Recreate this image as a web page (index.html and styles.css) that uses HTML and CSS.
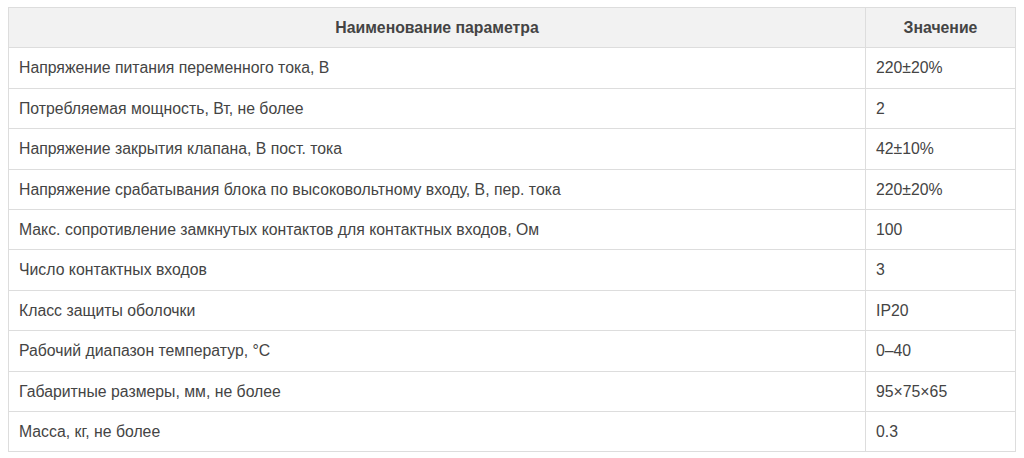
FILE: index.html
```html
<!DOCTYPE html>
<html lang="ru">
<head>
<meta charset="utf-8">
<link rel="stylesheet" href="styles.css">
</head>
<body>
<table class="specs">
  <colgroup><col class="c-name"><col class="c-val"></colgroup>
  <thead>
    <tr><th>Наименование параметра</th><th>Значение</th></tr>
  </thead>
  <tbody>
    <tr><td>Напряжение питания переменного тока, В</td><td>220±20%</td></tr>
    <tr><td>Потребляемая мощность, Вт, не более</td><td>2</td></tr>
    <tr><td>Напряжение закрытия клапана, В пост. тока</td><td>42±10%</td></tr>
    <tr><td>Напряжение срабатывания блока по высоковольтному входу, В, пер. тока</td><td>220±20%</td></tr>
    <tr><td>Макс. сопротивление замкнутых контактов для контактных входов, Ом</td><td>100</td></tr>
    <tr><td>Число контактных входов</td><td>3</td></tr>
    <tr><td>Класс защиты оболочки</td><td>IP20</td></tr>
    <tr><td>Рабочий диапазон температур, °С</td><td>0–40</td></tr>
    <tr><td>Габаритные размеры, мм, не более</td><td>95×75×65</td></tr>
    <tr><td>Масса, кг, не более</td><td>0.3</td></tr>
  </tbody>
</table>
</body>
</html>
```
FILE: styles.css
```css
html, body {
  margin: 0;
  background: #fff;
}
body {
  padding: 7px 8px;
  font-family: "Liberation Sans", Arial, sans-serif;
  font-size: 15.8px;
  color: #444;
}
.specs {
  width: 100%;
  border-collapse: collapse;
  border: 1px solid #ddd;
}
.c-name { width: 857px; }
.specs th,
.specs td {
  border: 1px solid #ddd;
  padding: 8px 10px;
  line-height: 23.4px;
  text-align: left;
}
.specs th {
  background: #f2f2f2;
  font-weight: bold;
  text-align: center;
  color: #444;
}
```
